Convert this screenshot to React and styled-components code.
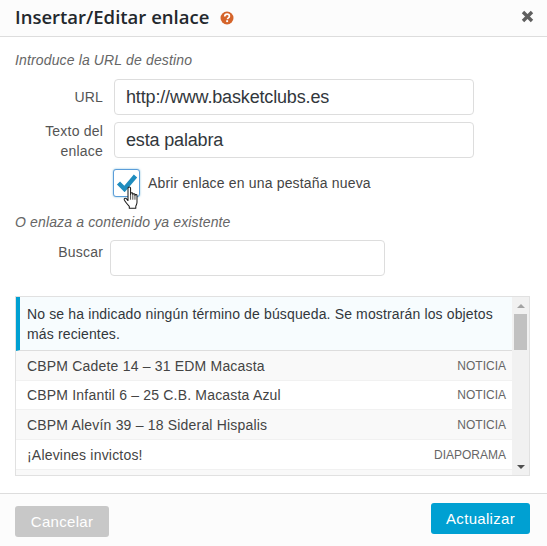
import React from "react";
import styled, { createGlobalStyle } from "styled-components";

const Global = createGlobalStyle`
  html, body { margin: 0; padding: 0; background: #fff; }
  body { font-family: "Liberation Sans", Arial, sans-serif; color: #444; overflow: hidden; }
  * { box-sizing: border-box; }
`;

const Dialog = styled.div`
  width: 547px; height: 546px; display: flex; flex-direction: column; background: #fff;
`;
const Header = styled.header`
  height: 37px; flex: none; display: flex; align-items: center; padding: 0 13px 2px 15px;
  background: #fcfcfc; border-bottom: 1px solid #ddd;
`;
const Title = styled.h1`
  margin: 0; font: 600 18.5px/1 "Open Sans", sans-serif; color: #23282d;
`;
const HelpIcon = styled.svg`
  width: 14px; height: 14px; margin: 2px 0 0 11px; flex: none;
`;
const Close = styled.svg`
  width: 13px; height: 13px; margin: -2px 0 0 auto; flex: none;
`;
const Body = styled.div`
  flex: 1; padding: 14px 17px 0 15px; min-height: 0;
`;
const Hint = styled.p`
  margin: ${p => p.$mt || 0}px 0 0; font-size: 14px; letter-spacing: .14px; line-height: 18px; font-style: italic; color: #666;
`;
const Row = styled.div`
  display: flex; align-items: flex-start; margin-top: ${p => p.$mt}px;
`;
const Label = styled.label`
  width: ${p => p.$w}px; flex: none; text-align: right; font-size: 14px; letter-spacing: .2px; line-height: 19.5px; color: #555;
  padding-top: ${p => p.$pt}px;
`;
const Input = styled.input`
  display: block; width: ${p => p.$w}px; height: 36px; margin-left: ${p => p.$ml}px; padding: 0 11px;
  border: 1px solid #ddd; border-radius: 4px; background: #fff;
  font: 18px "Liberation Sans", Arial, sans-serif; letter-spacing: -.16px; color: #32373c; outline: none;
`;
const CheckRow = styled.div`
  display: flex; align-items: center; margin: 7px 0 0 98px; position: relative; height: 29px;
`;
const CheckBox = styled.span`
  width: 27px; height: 28px; flex: none; display: flex; align-items: center; justify-content: center;
  border: 1px solid #5b9dd9; border-radius: 3px; background: #fff; box-shadow: 0 0 2px rgba(30,140,190,.6);
`;
const CheckText = styled.span`
  margin-left: 8px; font-size: 14px; letter-spacing: .17px; color: #444;
`;
const Pointer = styled.svg`
  position: absolute; left: 9px; top: 18px; width: 18px; height: 24px;
`;
const ResultBox = styled.div`
  height: 180px; margin-top: 20px; width: 515px; border: 1px solid #e1e1e1; display: flex; overflow: hidden; background: #f0f0f0;
`;
const ResultList = styled.div`
  flex: 1; min-width: 0; background: #fff;
`;
const Notice = styled.div`
  height: 54px; padding: 7px 10px 0 7px; background: #f7fcfe; border-left: 4px solid #00a0d2; border-bottom: 1px solid #ddd;
  font-size: 14px; letter-spacing: .14px; line-height: 20px; color: #32373c;
`;
const Item = styled.div`
  height: ${p => p.$h}px; display: flex; justify-content: space-between; align-items: center; padding: 0 6px 0 11px;
  background: ${p => (p.$alt ? "#f9f9f9" : "#fff")}; border-bottom: 1px solid #f1f1f1; font-size: 14px; letter-spacing: .19px; color: #444;
`;
const Kind = styled.span`
  font-size: 12px; letter-spacing: 0; color: #666; text-transform: uppercase;
`;
const Scroll = styled.div`
  width: 17px; flex: none; display: flex; flex-direction: column; align-items: center; background: #f1f1f1;
`;
const ArrowBtn = styled.div`
  height: 17px; flex: none; display: flex; align-items: center; justify-content: center;
`;
const Arrow = styled.span`
  width: 0; height: 0; border-left: 4px solid transparent; border-right: 4px solid transparent;
  ${p => p.$up ? "border-bottom: 4px solid #a3a3a3;" : "border-top: 4px solid #505050;"}
`;
const Thumb = styled.div`
  width: 13px; height: 36px; background: #c1c1c1;
`;
const Track = styled.div`
  flex: 1;
`;
const Footer = styled.footer`
  height: 53px; flex: none; display: flex; justify-content: space-between; padding: 9px 17px 0 15px;
  background: #fcfcfc; border-top: 1px solid #ddd;
`;
const Button = styled.button`
  border: 0; border-radius: 3px; padding: 0; font: 15px "Liberation Sans", Arial, sans-serif; letter-spacing: .3px; color: #fff;
  width: ${p => p.$w}px; height: ${p => p.$h}px; margin-top: ${p => p.$mt}px; background: ${p => p.$bg};
`;

const rows = [
  ["CBPM Cadete 14 – 31 EDM Macasta", "Noticia", true, 30],
  ["CBPM Infantil 6 – 25 C.B. Macasta Azul", "Noticia", false, 29],
  ["CBPM Alevín 39 – 18 Sideral Hispalis", "Noticia", true, 30],
  ["¡Alevines invictos!", "Diaporama", false, 30],
  ["", "", true, 10],
];

export default function App() {
  return (
    <Dialog>
      <Global />
      <Header>
        <Title>Insertar/Editar enlace</Title>
        <HelpIcon viewBox="0 0 14 14">
          <circle cx="7" cy="7" r="6.5" fill="#d5642a" />
          <path d="M4.7 5.5C4.8 4 5.8 3.2 7.100 3.200c1.300 0 2.300.8 2.300 2 0 1.700-1.900 1.600-1.900 3" fill="none" stroke="#fff" strokeWidth="1.700" />
          <rect x="6.200" y="9.200" width="1.900" height="1.900" fill="#fff" />
        </HelpIcon>
        <Close viewBox="0 0 13 13">
          <path d="M2 2l9 9M11 2l-9 9" stroke="#5f5f5f" strokeWidth="3.400" />
        </Close>
      </Header>
      <Body>
        <Hint>Introduce la URL de destino</Hint>
        <Row $mt={10}>
          <Label $w={88} $pt={9}>URL</Label>
          <Input $w={360} $ml={11} defaultValue="http://www.basketclubs.es" />
        </Row>
        <Row $mt={7}>
          <Label $w={88} $pt={0}>Texto del enlace</Label>
          <Input $w={360} $ml={11} defaultValue="esta palabra" />
        </Row>
        <CheckRow>
          <CheckBox>
            <svg width="22" height="19" viewBox="0 0 22 19">
              <path d="M2.500 10l6 6L19.500 3" fill="none" stroke="#1e8cbe" strokeWidth="4.400" />
            </svg>
          </CheckBox>
          <CheckText>Abrir enlace en una pestaña nueva</CheckText>
          <Pointer viewBox="0 0 20 28">
            <path d="M6.500 2.500c0-1.800 3-1.800 3 0V10l0-1c0-1.500 2.600-1.500 2.600 0v1c0-1.400 2.500-1.400 2.500 0v1c0-1.300 2.400-1.300 2.400 0v8c0 2-.8 3-1.400 4.500V26H8v-2.300C6 21.500 3.800 19 2.300 16.500c-1-1.800 1-3 2.300-1.700L6.500 17z" fill="#fff" stroke="#1a1a1a" strokeWidth="1.200" strokeLinejoin="round" />
            <path d="M9.500 10v6M12.100 10v6M14.600 11v5" stroke="#1a1a1a" strokeWidth="0.900" fill="none" />
          </Pointer>
        </CheckRow>
        <Hint $mt={16}>O enlaza a contenido ya existente</Hint>
        <Row $mt={9}>
          <Label $w={88} $pt={3}>Buscar</Label>
          <Input $w={275} $ml={7} />
        </Row>
        <ResultBox>
          <ResultList>
            <Notice>No se ha indicado ningún término de búsqueda. Se mostrarán los objetos más recientes.</Notice>
            {rows.map(([t, k, alt, h], i) => (
              <Item key={i} $alt={alt} $h={h}>
                <span>{t}</span>
                <Kind>{k}</Kind>
              </Item>
            ))}
          </ResultList>
          <Scroll>
            <ArrowBtn><Arrow $up /></ArrowBtn>
            <Thumb />
            <Track />
            <ArrowBtn><Arrow /></ArrowBtn>
          </Scroll>
        </ResultBox>
      </Body>
      <Footer>
        <Button $w={94} $h={31} $mt={3} $bg="#c8c8c8">Cancelar</Button>
        <Button $w={99} $h={31} $mt={0} $bg="#00a0d2">Actualizar</Button>
      </Footer>
    </Dialog>
  );
}
